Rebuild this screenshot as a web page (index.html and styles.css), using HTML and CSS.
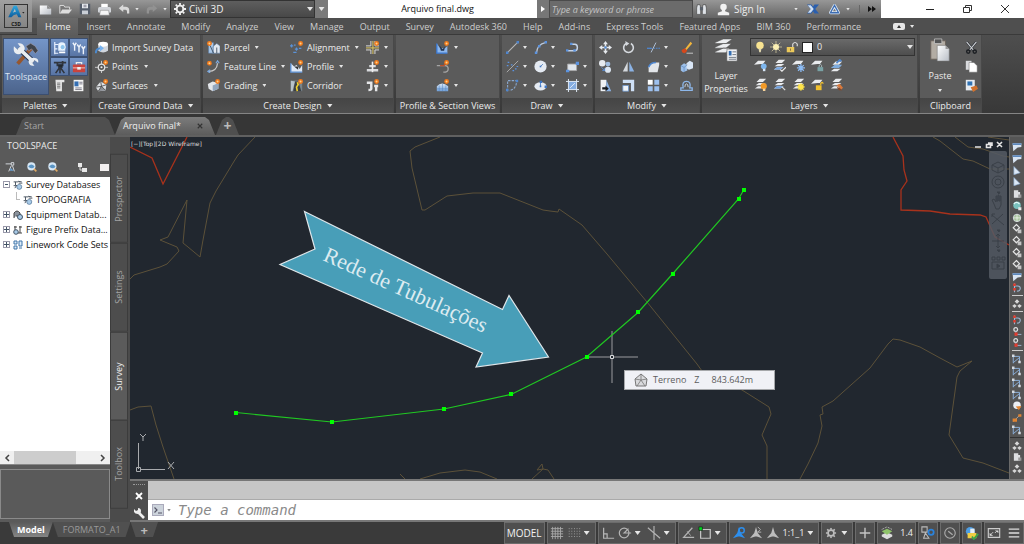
FILE: index.html
```html
<!DOCTYPE html>
<html lang="pt">
<head>
<meta charset="utf-8">
<title>Arquivo final.dwg</title>
<link rel="stylesheet" href="styles.css">
</head>
<body>
<svg class="sprite" aria-hidden="true">
  <defs>
    <linearGradient id="paper" x1="0" y1="0" x2="1" y2="1"><stop offset="0" stop-color="#fff"/><stop offset="1" stop-color="#b9bec6"/></linearGradient>
    <linearGradient id="blue" x1="0" y1="0" x2="0" y2="1"><stop offset="0" stop-color="#dbe9fa"/><stop offset="1" stop-color="#6f9fd8"/></linearGradient>
    <linearGradient id="logo" x1="0" y1="0" x2="0" y2="1"><stop offset="0" stop-color="#2fa8e0"/><stop offset="1" stop-color="#0d5c9c"/></linearGradient>
  </defs>
  <symbol id="spark" viewBox="0 0 6 6"><circle cx="3" cy="3" r="3" fill="#f07a1c"/><circle cx="3" cy="3" r="1.200" fill="#ffd08a"/></symbol>
  <symbol id="new" viewBox="0 0 16 16"><path d="M1 3h9l5 4v7H1z" fill="url(#paper)"/><path d="M10 3v4h5" fill="#888" /></symbol>
  <symbol id="open" viewBox="0 0 16 16"><path d="M1 13V3h5l1 2h6v3" fill="#777" stroke="#ddd" stroke-width="1.2"/><path d="M1 13l3-5h12l-4 5z" fill="#ddd"/></symbol>
  <symbol id="save" viewBox="0 0 16 16"><path d="M1 1h14v14H1z" fill="#545d6b"/><path d="M4 1h8v6H4z" fill="#e6e9ee"/><path d="M4 10h8v5H4z" fill="#c9ced6"/><path d="M6 3h4M6 5h4" stroke="#667"/></symbol>
  <symbol id="print" viewBox="0 0 16 16"><path d="M4 1h8v5H4z" fill="#fff"/><rect y="5" width="16" height="7" rx="2" fill="#d2d5da"/><path d="M3 9h10l1 6H2z" fill="#f6f6f6" stroke="#777" stroke-width=".6"/></symbol>
  <symbol id="undo" viewBox="0 0 16 16"><path d="M1 7l6-5v3h3q5 0 5 5v4h-3v-3q0-2-2-2H7v3z" fill="#d9d9d9"/></symbol>
  <symbol id="redo" viewBox="0 0 16 16"><path d="M15 7L9 2v3H6q-5 0-5 5v4h3v-3q0-2 2-2h3v3z" fill="#929292"/></symbol>
  <symbol id="gear" viewBox="0 0 16 16"><circle cx="8" cy="8" r="4.5" fill="none" stroke="currentColor" stroke-width="2.6"/><path d="M8 0v3M8 13v3M0 8h3M13 8h3M2.3 2.3l2 2M11.7 11.7l2 2M2.3 13.7l2-2M11.7 4.3l2-2" stroke="currentColor" stroke-width="2.4"/></symbol>
  <symbol id="binoc" viewBox="0 0 16 16"><path d="M2 14V6l1-4h3l1 4v8zM9 14V6l1-4h3l1 4v8z" fill="#dfe3e8" stroke="#444" stroke-width=".8"/><path d="M6 5h4v4H6z" fill="#59606a"/></symbol>
  <symbol id="user" viewBox="0 0 16 16"><circle cx="8" cy="5" r="4" fill="#f2f2f2"/><path d="M6 8h4v2l5 2v3H1v-3l5-2z" fill="#f2f2f2"/></symbol>
  <symbol id="xchg" viewBox="0 0 16 16"><path d="M0 2h6l2 3 2-3h6l-5 6 5 6h-6l-2-3-2 3H0l5-6z" fill="#2a5fae"/><path d="M1 3h4l4 5-4 5H1l4-5z" fill="#cfe0f4"/></symbol>
  <symbol id="a360" viewBox="0 0 16 16"><path d="M8 3l5 9H3z" fill="none" stroke="#dde8f5" stroke-width="3.600" stroke-linejoin="round"/><path d="M8 3l5 9H3z" fill="none" stroke="#3d6db2" stroke-width="1.600"/></symbol>
  <symbol id="tools" viewBox="0 0 28 26"><path d="M5 23L20 6" stroke="#96572f" stroke-width="4"/><path d="M14 4l5-3 5 3 3 5-3 3-4-5-3 2z" fill="#3f444b" stroke="#99a" stroke-width=".7"/><path d="M6 6l16 15" stroke="#22304a" stroke-width="6"/><path d="M6 6l16 15" stroke="#e9edf1" stroke-width="4"/><path d="M1 4l4 4 3-3-3-4q5-1 7 3t-2 7-7 1-2-8zM27 22l-4-3-3 2 3 4q-5 1-6-3t2-5 6 0 2 5z" fill="#e9edf1"/></symbol>
  <symbol id="pal1" viewBox="0 0 16 16"><path d="M2 1v14M2 4h4M2 9h3M2 14h4" stroke="#e8f0ff" stroke-width="1.4"/><path d="M6 3q4-3 8 0v8H6z" fill="#e8f3ff"/><circle cx="11" cy="7" r="3" fill="#8fc6ee" stroke="#fff"/><path d="M7 13h7" stroke="#fff" stroke-width="2"/></symbol>
  <symbol id="pal2" viewBox="0 0 16 16"><path d="M1 2l2 3 2-3M3 5v6M6 4l2 3 2-3M8 7v6M11 6l2 3 2-3M13 9v6" fill="none" stroke="#edf2fa" stroke-width="1.6"/></symbol>
  <symbol id="pal3" viewBox="0 0 16 16"><path d="M1 3h14M5 2v4h6V1" fill="none" stroke="#31363e" stroke-width="2"/><path d="M6 5h5v4H6z" fill="#222931"/><path d="M8 8L3 15M8 8l5 7M8 8v7" stroke="#30353e" stroke-width="1.8"/></symbol>
  <symbol id="pal4" viewBox="0 0 16 16"><path d="M5 5V3h6v2" fill="none" stroke="#eee" stroke-width="1.5"/><rect x="1" y="5" width="14" height="9" rx="1" fill="#c9443e"/><path d="M1 9h14" stroke="#f5d4d0"/><path d="M6 8h4v3H6z" fill="#eee"/></symbol>
  <symbol id="pal5" viewBox="0 0 16 16"><path d="M3 1h11v3h-3v11H4z" fill="#e4e4e4"/><path d="M5 5h4M5 7h4M5 9h4M5 11h4" stroke="#666"/></symbol>
  <symbol id="pal6" viewBox="0 0 16 16"><rect x="2" y="1" width="12" height="14" fill="#f4f4f4"/><rect x="3" y="3" width="5" height="6" fill="#346eb2"/><path d="M9 4h4M9 6h4M4 11h8M4 13h8" stroke="#667"/></symbol>
  <symbol id="import" viewBox="0 0 16 16"><path d="M4 4v8q6 4 12 0V4z" fill="#cfd5dd"/><ellipse cx="10" cy="4" rx="6" ry="3" fill="#fff"/><path d="M1 15q0-6 6-6" fill="none" stroke="#4c8bd0" stroke-width="2.400"/><path d="M6 5l5 4-5 4z" fill="#76b2ee"/></symbol>
  <symbol id="points" viewBox="0 0 16 16"><path d="M8 1v15M0 9h16" stroke="#ddd"/><circle cx="8" cy="9" r="4" fill="#555" stroke="#e0e0e0" stroke-width="1.600"/><circle cx="8" cy="9" r="1.300" fill="#eee"/><use href="#spark" x="10" y="0" width="6" height="6"/></symbol>
  <symbol id="surf" viewBox="0 0 16 16"><path d="M1 10l6-7 7 4-1 7-9 1z" fill="#dfe2e6"/><path d="M8 9l-4 6 9-1z" fill="#8b8f95"/><path d="M1 10l7-1-1-6M8 9l6-2M8 9l-4 6M8 9l5 5" stroke="#444" fill="none"/><use href="#spark" x="10" y="0" width="6" height="6"/></symbol>
  <symbol id="parcel" viewBox="0 0 16 16"><path d="M2 2h6v13H2z" fill="#aac8e8"/><path d="M7 7l5-4 4 3v9H7z" fill="#e2e8f0"/><path d="M2 2h6v13H2zM7 7l5-4 4 3v9H7z" fill="none" stroke="#5d7fa8" stroke-width=".7"/><path d="M4 6l4 9M12 8v7" stroke="#345"/><use href="#spark" x="0" y="0" width="6" height="6"/></symbol>
  <symbol id="feat" viewBox="0 0 16 16"><path d="M2 14q10 0 11-10" fill="none" stroke="#c9c9c9" stroke-width="1.500"/><path d="M11 4l2-3 2 3M4 12l-3 2 3 2" fill="none" stroke="#7ba8de" stroke-width="1.500"/><use href="#spark" x="0" y="1" width="6" height="6"/></symbol>
  <symbol id="grade" viewBox="0 0 16 16"><path d="M1 6l6-3 7 2v7l-7 3-5-3z" fill="#e3e6ea"/><path d="M7 8l7-3v7l-7 3z" fill="#93a6bd"/><use href="#spark" x="10" y="0" width="6" height="6"/></symbol>
  <symbol id="align" viewBox="0 0 16 16"><path d="M0 6h4M2 4v4M6 10h4M8 8v4M4 14h4M11 9h3M6 4v2" stroke="#5b93d8" stroke-width="1.400"/><use href="#spark" x="10" y="0" width="6" height="6"/></symbol>
  <symbol id="profile" viewBox="0 0 16 16"><path d="M1 4l4 4 3-2 4 5 3-5v9H1z" fill="#dfe9f7"/><path d="M1 4v11h14" fill="none" stroke="#5a8fd2" stroke-width="1.600"/><path d="M5 8h5v4z" fill="#333"/><use href="#spark" x="10" y="0" width="6" height="6"/></symbol>
  <symbol id="corr" viewBox="0 0 16 16"><path d="M1 2h14v13H1z" fill="#78848a"/><path d="M6 3h4l4 12H4z" fill="#3c4146"/><path d="M9 4l1 3-2 3 1 5" stroke="#f0cf2d" stroke-width="2" fill="none"/><path d="M1 2l5 1-3 12H1z" fill="#b8c2ca"/><use href="#spark" x="10" y="0" width="6" height="6"/></symbol>
  <symbol id="inter" viewBox="0 0 16 16"><path d="M0 6h6V0M0 11h6v5M16 6h-5V0M16 11h-5v5" fill="none" stroke="#ddd" stroke-width="1.200"/><path d="M8.500 0v16M0 8.500h16" stroke="#e0c95a" stroke-width="1.200"/><use href="#spark" x="10" y="0" width="6" height="6"/></symbol>
  <symbol id="assem" viewBox="0 0 16 16"><path d="M1 11h14v3H1zM4 6h8v3H4z" fill="#d8dadd"/><path d="M8 2v13" stroke="#eee" stroke-width="2"/><use href="#spark" x="10" y="0" width="6" height="6"/></symbol>
  <symbol id="pipe" viewBox="0 0 16 16"><path d="M1 3h7v9q0 3-5 3v-3h2V6H1zM10 7h5v3h-1v5h-3v-5h-1z" fill="#e5e6e8"/><use href="#spark" x="10" y="0" width="6" height="6"/></symbol>
  <symbol id="pview" viewBox="0 0 16 16"><path d="M1 3v12h13V6l-3 3H5z" fill="#8db7ec"/><path d="M1 3v12h13" fill="none" stroke="#3a78d2" stroke-width="1.600"/><path d="M4 5l4 5 3-3-1 5H6z" fill="#23344e"/><use href="#spark" x="10" y="0" width="6" height="6"/></symbol>
  <symbol id="sline" viewBox="0 0 16 16"><path d="M1 7h10q4 0 4 4t-6 4" fill="none" stroke="#a4a4a4" stroke-width="1.600"/><path d="M5 7h5l1-3" fill="none" stroke="#b8512c" stroke-width="1.600"/><use href="#spark" x="10" y="0" width="6" height="6"/></symbol>
  <symbol id="sview" viewBox="0 0 16 16"><path d="M1 9q6-7 14 0v6H1z" fill="url(#blue)"/><path d="M4 8v7M8 6v9M12 8v7M1 12h14" stroke="#5284c2" stroke-width=".6"/><use href="#spark" x="10" y="0" width="6" height="6"/></symbol>
  <symbol id="line" viewBox="0 0 16 16"><path d="M2 14L14 2" stroke="#b9b9b9" stroke-width="1.300"/><path d="M0 13h3v3H0zM13 0h3v3h-3z" fill="#4f86cf"/></symbol>
  <symbol id="arc" viewBox="0 0 16 16"><path d="M3 15Q4 4 14 2" fill="none" stroke="#b9c6d8" stroke-width="1.500"/><path d="M1 13h3v3H1zM13 0h3v3h-3zM5 5h3v3H5z" fill="#5b93e0"/></symbol>
  <symbol id="pline" viewBox="0 0 16 16"><path d="M2 12h9q3 0 3-4t-3-4H7" fill="none" stroke="#c4d4ea" stroke-width="1.800"/><path d="M0 10h3v3H0zM5 2h3v3H5zM9 10h3v3H9z" fill="#5b93e0"/></symbol>
  <symbol id="cline" viewBox="0 0 16 16"><path d="M1 15L15 1" stroke="#b9b9b9"/><path d="M1 7h2M2 3h2M6 6h2M11 11h2M8 13h2M13 8h2" stroke="#5b93e0" stroke-width="1.500"/></symbol>
  <symbol id="circ" viewBox="0 0 16 16"><circle cx="8" cy="8" r="7.500" fill="#e4eaf2"/><path d="M8 8l3-3" stroke="#4777b8"/><path d="M7 7h2v2H7z" fill="#3d75c2"/></symbol>
  <symbol id="rect" viewBox="0 0 16 16"><path d="M2 5h11v8H2z" fill="#dfe5ec" stroke="#aaa"/><path d="M0 12h4v3H0zM12 2h4v4h-4z" fill="#5b93e0"/></symbol>
  <symbol id="curve" viewBox="0 0 16 16"><path d="M2 15V2h11q0 11-9 12" fill="none" stroke="#8ba9cf" stroke-dasharray="3 1.500" stroke-width="1.300"/><path d="M0 12h3v3H0zM12 1h3v3h-3z" fill="#4f86cf"/></symbol>
  <symbol id="ell" viewBox="0 0 16 16"><ellipse cx="8" cy="9" rx="7.500" ry="5" fill="#e4eaf2"/><path d="M8 9V3" stroke="#3d75c2"/><path d="M7 2h3v3H7zM7 8h2v2H7zM13 8h3v3h-3z" fill="#3d75c2"/></symbol>
  <symbol id="hatch" viewBox="0 0 16 16"><path d="M3 3h10v10H3z" fill="#86aee2"/><path d="M3 0v16M13 0v16M0 3h16M0 13h16M5 11l6-6" stroke="#dfe9f6" stroke-width="1.200"/></symbol>
  <symbol id="move" viewBox="0 0 16 16"><path d="M8 0l3 4H9v3h3V5l4 3-4 3V9H9v3h2l-3 4-3-4h2V9H4v2L0 8l4-3v2h3V4H5z" fill="#e7eaee"/><circle cx="8" cy="8" r="1.500" fill="#4f86cf"/></symbol>
  <symbol id="rotate" viewBox="0 0 16 16"><path d="M5 3a6 6 0 1 0 6 0" fill="none" stroke="#d5d9de" stroke-width="2"/><path d="M4 0l5 3-4 3z" fill="#d5d9de"/></symbol>
  <symbol id="trim" viewBox="0 0 16 16"><path d="M0 9h6" stroke="#4f86cf" stroke-width="1.600"/><path d="M8 9h8" stroke="#4f86cf" stroke-width="1.300" stroke-dasharray="2 1"/><path d="M5 14L11 2" stroke="#aebfd6" stroke-width="1.200"/></symbol>
  <symbol id="erase" viewBox="0 0 16 16"><path d="M6 10l7-9 2 2-7 8z" fill="#f2b63c"/><path d="M2 11l4-2 3 3-3 3q-4 0-4-4z" fill="#d5481c"/><path d="M8 15h8" stroke="#ddd"/></symbol>
  <symbol id="copy" viewBox="0 0 16 16"><circle cx="4" cy="4" r="4" fill="#e6eaef"/><circle cx="11" cy="5" r="3" fill="#9fbce0"/><circle cx="11" cy="12" r="3.800" fill="#dce6f2"/><path d="M3 9l4 4M7 10v3H4" stroke="#5b93e0" fill="none"/></symbol>
  <symbol id="mirror" viewBox="0 0 16 16"><path d="M7 2v12H1z" fill="#d4d8dd"/><path d="M9 2v12h6z" fill="#8bb2e4"/></symbol>
  <symbol id="fillet" viewBox="0 0 16 16"><path d="M2 15V9q2-6 9-6h4v3l-2 9z" fill="#e3e6ea"/><path d="M2 9q2-6 9-6" fill="none" stroke="#4f86cf" stroke-width="2"/></symbol>
  <symbol id="box" viewBox="0 0 16 16"><path d="M1 7l4-3 4 2v7l-5 2-3-2z" fill="#9dc0ea"/><path d="M8 4l4-3 4 2v7l-5 2-3-2z" fill="#d9e6f6"/><path d="M1 7l4 2 4-3M5 9v6" stroke="#537fb7" fill="none" stroke-width=".7"/></symbol>
  <symbol id="stretch" viewBox="0 0 16 16"><path d="M2 1h7v14H2z" fill="#f0f2f5"/><path d="M9 1l6 14H9z" fill="#8bb2e4"/><path d="M4 10h4V8l4 4-4 3v-2H4z" fill="#161a20"/></symbol>
  <symbol id="scale" viewBox="0 0 16 16"><path d="M1 1h14v14h-4V5H1z" fill="#cfe0f6"/><path d="M1 8h7v7H1z" fill="#f0f4f9" stroke="#6c96cc"/></symbol>
  <symbol id="array" viewBox="0 0 16 16"><path d="M1 1h6v6H1z" fill="#fff"/><path d="M9 1h6v6H9zM1 9h6v6H1zM9 9h6v6H9z" fill="#9dc0ee"/></symbol>
  <symbol id="offset" viewBox="0 0 16 16"><path d="M1 14h14v-3h-3q2-8-4-8t-4 8H1z" fill="none" stroke="#8db7ea" stroke-width="1.600"/><path d="M6 10q0-4 2-4t2 4" fill="none" stroke="#dbe7f6"/></symbol>
  <symbol id="stack" viewBox="0 0 16 16"><path d="M1 13l4-3h8l-4 3zM2 9l4-3h8l-4 3zM3 5l4-4h8l-4 4z" fill="#e9ebee"/></symbol>
  <symbol id="lprops" viewBox="0 0 26 26"><path d="M1 5l9-4h10l-7 5H1zM1 10l9-4h9l-6 5H1zM1 15l9-4h7l-4 5H1z" fill="#eceef0" stroke="#4b4b4b" stroke-width=".6"/><path d="M14 12h11v13H14z" fill="#f2f4f6" stroke="#666" stroke-width=".6"/><path d="M16 14h3v5h-3z" fill="#346eb2"/><path d="M20 15h4M20 18h4M16 21h8M16 23h8" stroke="#68727e"/></symbol>
  <symbol id="l1" viewBox="0 0 16 16"><path d="M0 7l5-5h9l-3 4H8z" fill="#e9ebee"/><circle cx="12" cy="9" r="3.500" fill="#7db6ee"/><path d="M11 12h3v3h-3z" fill="#d6e6f8"/></symbol>
  <symbol id="l2" viewBox="0 0 16 16"><use href="#stack"/><path d="M1 13l4-3h8l-4 3z" fill="#78a9e6"/><path d="M9 13l2 2 5-5" stroke="#eee" fill="none" stroke-width="1.500"/></symbol>
  <symbol id="l3" viewBox="0 0 16 16"><path d="M0 7l5-5h9l-3 4H8z" fill="#e9ebee"/><path d="M11 6v10M6 11h10M7.500 7.500l7 7M14.500 7.500l-7 7" stroke="#8cbcf5" stroke-width="1.600"/></symbol>
  <symbol id="l4" viewBox="0 0 16 16"><path d="M0 7l5-5h9l-3 4H8z" fill="#e9ebee"/><path d="M10 10V8q2-3 3 0v2" stroke="#b4c9cc" fill="none"/><path d="M8 10h7v5H8z" fill="#79a2a5"/></symbol>
  <symbol id="l5" viewBox="0 0 16 16"><use href="#stack" y="2"/><path d="M1 11l5-4h9l-4 4z" fill="#7eacdf"/><path d="M8 5l4-4 2 2" stroke="#4f86cf" stroke-width="2" fill="none"/></symbol>
  <symbol id="l6" viewBox="0 0 16 16"><use href="#stack"/><circle cx="12" cy="10" r="3.800" fill="#f39a27"/><path d="M11 13h3v3h-3z" fill="#f8d49b"/></symbol>
  <symbol id="l7" viewBox="0 0 16 16"><use href="#stack"/><path d="M1 13l4-3h8l-4 3z" fill="#6c9fe0"/><path d="M11 11l4 4" stroke="#ddd" stroke-width="1.500"/></symbol>
  <symbol id="l8" viewBox="0 0 16 16"><use href="#stack"/><circle cx="11" cy="11" r="3.500" fill="#ffe44a"/><path d="M11 6v10M6 11h10M7.500 7.500l7 7M14.500 7.500l-7 7" stroke="#ffe44a"/></symbol>
  <symbol id="l9" viewBox="0 0 16 16"><path d="M0 7l5-5h9l-3 4H8z" fill="#e9ebee"/><path d="M12 9V7q2-3 3 0" stroke="#f2c12e" fill="none" stroke-width="1.500"/><path d="M6 9h7v6H6z" fill="#f2c12e"/></symbol>
  <symbol id="l10" viewBox="0 0 16 16"><use href="#stack"/><path d="M8 9l6 5 2-2-4-5z" fill="#d9793c"/><path d="M8 10l3 5h4z" fill="#8e4520"/></symbol>
  <symbol id="bulb" viewBox="0 0 16 16"><circle cx="8" cy="6" r="5" fill="#f8e391"/><path d="M6 10h4l-1 5H7z" fill="#e0d6ae"/></symbol>
  <symbol id="sun" viewBox="0 0 16 16"><path d="M8 0v16M0 8h16M2.300 2.300l11.400 11.400M13.700 2.300L2.300 13.700" stroke="#d8cda2"/><circle cx="8" cy="8" r="4" fill="#fbf0b4"/></symbol>
  <symbol id="lock" viewBox="0 0 16 16"><path d="M9 8V4q3-4 6 0v3" stroke="#ddd" fill="none" stroke-width="1.500"/><path d="M1 8h10v7H1z" fill="#ecc95a"/><path d="M6 10v3" stroke="#654"/></symbol>
  <symbol id="paste" viewBox="0 0 22 26"><path d="M1 3h16v20H1z" fill="#b3aca3" stroke="#6a6159"/><path d="M5 1h8v5H5z" fill="#555" stroke="#ccc" stroke-width=".8"/><path d="M8 8h9l4 4v13H8z" fill="url(#paper)" stroke="#777" stroke-width=".6"/><path d="M17 8v4h4z" fill="#999"/></symbol>
  <symbol id="cut" viewBox="0 0 16 16"><path d="M2 1l9 11M14 1L5 12" stroke="#2f3338" stroke-width="3"/><path d="M2 1l9 11M14 1L5 12" stroke="#cfd2d6" stroke-width="1.400"/><circle cx="4" cy="13" r="2" fill="none" stroke="#1c1f23" stroke-width="1.700"/><circle cx="12" cy="13" r="2" fill="none" stroke="#1c1f23" stroke-width="1.700"/></symbol>
  <symbol id="copyc" viewBox="0 0 16 16"><path d="M1 1h7v11H1z" fill="#d9dbde"/><path d="M5 3h6l4 4v8H5z" fill="#fff" stroke="#666" stroke-width=".6"/></symbol>
  <symbol id="match" viewBox="0 0 16 16"><path d="M1 1h11v13H1z" fill="#e7ebf0"/><path d="M3 3h6v5H3z" fill="#2f72b4"/><path d="M7 10l7-2 2 4-6 4z" fill="#d0712c"/></symbol>
  <symbol id="person" viewBox="0 0 16 16"><path d="M8 1l2 7 5 6-6-2H7l-6 2 5-6z" fill="currentColor"/></symbol>
  <symbol id="survey" viewBox="0 0 16 16"><path d="M1 3h7M4 3v5M1 9h5M8 2l6 1M9 5h6M3 13l3-5" stroke="#48525e" stroke-width="1.500"/><circle cx="10" cy="11" r="4" fill="#a9cbe8" stroke="#45688c"/></symbol>
  <symbol id="find" viewBox="0 0 16 16"><circle cx="7" cy="7" r="6.500" fill="#d6e7f5"/><path d="M2 7q5-6 10 0-4 6-10 0z" fill="#5b95c4"/><path d="M11 11l4 4" stroke="#e1aa62" stroke-width="2.500"/></symbol>
  <symbol id="station" viewBox="0 0 16 16"><path d="M1 3h9M10 1h4v4h-4zM10 6L6 15M12 6l3 9" stroke="#d9dde2" fill="none" stroke-width="1.500"/><path d="M9 9l5 5H8z" fill="#67a0d3"/></symbol>
  <symbol id="t1" viewBox="0 0 16 16"><path d="M1 2h14v6L9 9l-7 6z" fill="#d8e4f2"/><path d="M1 2h14v3H1z" fill="#5e89bd"/></symbol>
  <symbol id="t2" viewBox="0 0 16 16"><path d="M3 14V1l10 10z" fill="#dce8f5" stroke="#86a6cb"/></symbol>
  <symbol id="t3" viewBox="0 0 16 16"><path d="M3 2h7v3h3v9H3z" fill="#dedfe1"/><path d="M10 9h5v5h-5z" fill="#999"/></symbol>
  <symbol id="t4" viewBox="0 0 16 16"><circle cx="8" cy="7" r="6" fill="#79c1bd"/><path d="M3 5q4-5 9 0" stroke="#e4f7f6" fill="none" stroke-width="2"/><path d="M10 10h5v5h-5z" fill="#e8e8e8"/></symbol>
  <symbol id="t5" viewBox="0 0 16 16"><circle cx="8" cy="8" r="6" fill="#a8c39b" stroke="#eef"/><path d="M8 2v12M2 8h12" stroke="#fff"/></symbol>
  <symbol id="t6" viewBox="0 0 16 16"><path d="M7 1l5 5-5 5-5-5z" fill="none" stroke="#e2e2e2" stroke-width="2"/><path d="M9 9h6v6H9z" fill="#c4c4c4"/></symbol>
  <symbol id="t7" viewBox="0 0 16 16"><path d="M4 1v14M4 5h5q5 0 4 5-1 4-5 3" fill="none" stroke="#9fb6d0" stroke-width="1.800"/><path d="M2 1h4v4H2zM2 8h4v4H2z" fill="#e33c2e"/></symbol>
  <symbol id="t8" viewBox="0 0 16 16"><path d="M2 3v12M2 4h10v10M2 14l11-9" fill="none" stroke="#8db2dd" stroke-width="1.500"/><path d="M0 1h4v4H0zM10 11h4v4h-4z" fill="#d4dae0"/></symbol>
  <symbol id="t9" viewBox="0 0 16 16"><circle cx="8" cy="7" r="6" fill="#eceff3"/><path d="M6 9l9-1-4 7z" fill="#e08432"/></symbol>
  <symbol id="t10" viewBox="0 0 16 16"><path d="M2 14L13 3" stroke="#aaa" stroke-width="1.500"/><path d="M1 9h7v5H1zM10 2h5v4h-5z" fill="#e08432"/></symbol>
  <symbol id="t11" viewBox="0 0 16 16"><circle cx="6" cy="4" r="3" fill="none" stroke="#ddd" stroke-width="2"/><path d="M6 7v7M7 12h8" stroke="#9fb6d0" stroke-width="1.500"/><path d="M4 9h5v5H4z" fill="#e33c2e"/></symbol>
  <symbol id="triad" viewBox="0 0 16 16"><path d="M8 0l4 4-4 4-4-4zM4 8l4 3-4 4-4-4zM12 8l4 3-4 4-4-4z" fill="#d7d7d7" stroke="#444" stroke-width=".6"/></symbol>
</svg>

<header class="head">
  <button class="app" aria-label="Menu do aplicativo">
    <svg viewBox="0 0 22 22"><path d="M1 16L8 1h4l6 15h-4l-2-4q-4 0-7 4z" fill="url(#logo)"/><path d="M7 10q3-2 4-1L9.500 5z" fill="#b8bdc0"/><path d="M19 9h3l-1.500 2z" fill="#222"/></svg>
    <small>C3D</small>
  </button>
  <div class="head-rows">
    <div class="titlebar">
      <div class="qat">
        <button aria-label="Novo"><svg class="i13"><use href="#new"/></svg></button>
        <button aria-label="Abrir"><svg class="i13"><use href="#open"/></svg></button>
        <button aria-label="Salvar"><svg class="i12"><use href="#save"/></svg></button>
        <button aria-label="Imprimir"><svg class="i13"><use href="#print"/></svg></button>
        <button class="drop" aria-label="Desfazer"><svg class="i12"><use href="#undo"/></svg><i class="caret"></i></button>
        <button class="drop" aria-label="Refazer"><svg class="i12"><use href="#redo"/></svg><i class="caret"></i></button>
      </div>
      <button class="workspace"><svg class="i12"><use href="#gear"/></svg><span>Civil 3D</span><i class="caret big"></i></button>
      <button class="qat-more" aria-label="Mais"><i class="caret big"></i></button>
      <h1 class="doc-title">Arquivo final.dwg</h1>
      <button class="search-toggle" aria-label="Recolher busca"><i class="caret east"></i></button>
      <input class="search" type="search" placeholder="Type a keyword or phrase" aria-label="Busca">
      <div class="info">
        <button aria-label="Pesquisar"><svg class="i13"><use href="#binoc"/></svg></button>
        <button class="signin"><svg class="i13"><use href="#user"/></svg><span>Sign In</span><i class="caret"></i></button>
        <button aria-label="Exchange"><svg class="i12"><use href="#xchg"/></svg></button>
        <button class="drop" aria-label="A360"><svg class="i13"><use href="#a360"/></svg><i class="caret"></i></button>
        <button class="more" aria-label="Mais opções"><svg class="i8" viewBox="0 0 8 8"><path d="M0 1l4 3-4 3zM4 1l4 3-4 3z" fill="#111"/></svg></button>
      </div>
      <div class="win">
        <button aria-label="Minimizar"><svg viewBox="0 0 10 10"><path d="M1 5.500h8" stroke="#222"/></svg></button>
        <button aria-label="Restaurar"><svg viewBox="0 0 10 10"><path d="M1.500 3.500h6v5h-6zM3.500 3V1.500h6v5H8" fill="none" stroke="#333"/></svg></button>
        <button aria-label="Fechar"><svg viewBox="0 0 10 10"><path d="M1 1l8 8M9 1L1 9" stroke="#333"/></svg></button>
      </div>
    </div>
    <nav class="tabs">
      <button class="on">Home</button><button>Insert</button><button>Annotate</button><button>Modify</button><button>Analyze</button><button>View</button><button>Manage</button><button>Output</button><button>Survey</button><button>Autodesk 360</button><button>Help</button><button>Add-ins</button><button>Express Tools</button><button>Featured Apps</button><button>BIM 360</button><button>Performance</button>
      <button class="tabs-toggle" aria-label="Minimizar faixa"><svg viewBox="0 0 12 7"><rect width="12" height="7" rx="2" fill="#e6e6e6"/><path d="M4 5l2-3 2 3z" fill="#333"/></svg><i class="caret"></i></button>
    </nav>
  </div>
</header>

<section class="ribbon">
  <div class="panel palettes">
    <div class="body">
      <button class="toolspace-btn"><svg><use href="#tools"/></svg><span>Toolspace</span></button>
      <div class="pal-grid">
        <button class="lit" aria-label="Prospector"><svg class="i14"><use href="#pal1"/></svg></button><button class="lit" aria-label="Settings"><svg class="i14"><use href="#pal2"/></svg></button>
        <button class="lit" aria-label="Survey"><svg class="i14"><use href="#pal3"/></svg></button><button class="lit" aria-label="Toolbox"><svg class="i14"><use href="#pal4"/></svg></button>
        <button aria-label="Panorama"><svg class="i13"><use href="#pal5"/></svg></button><button aria-label="Properties"><svg class="i13"><use href="#pal6"/></svg></button>
      </div>
    </div>
    <h2>Palettes<i class="caret big"></i></h2>
  </div>
  <div class="panel ground">
    <div class="body col">
      <button><svg class="i13"><use href="#import"/></svg>Import Survey Data</button>
      <button><svg class="i13"><use href="#points"/></svg>Points<i class="caret"></i></button>
      <button><svg class="i13"><use href="#surf"/></svg>Surfaces<i class="caret"></i></button>
    </div>
    <h2>Create Ground Data<i class="caret big"></i></h2>
  </div>
  <div class="panel design">
    <div class="body cols3">
      <button><svg class="i13"><use href="#parcel"/></svg>Parcel<i class="caret"></i></button>
      <button><svg class="i13"><use href="#align"/></svg>Alignment<i class="caret"></i></button>
      <button aria-label="Intersections"><svg class="i13"><use href="#inter"/></svg><i class="caret"></i></button>
      <button><svg class="i13"><use href="#feat"/></svg>Feature Line<i class="caret"></i></button>
      <button><svg class="i13"><use href="#profile"/></svg>Profile<i class="caret"></i></button>
      <button aria-label="Assembly"><svg class="i13"><use href="#assem"/></svg><i class="caret"></i></button>
      <button><svg class="i13"><use href="#grade"/></svg>Grading<i class="caret"></i></button>
      <button><svg class="i13"><use href="#corr"/></svg>Corridor</button>
      <button aria-label="Pipe Network"><svg class="i13"><use href="#pipe"/></svg><i class="caret"></i></button>
    </div>
    <h2>Create Design<i class="caret big"></i></h2>
  </div>
  <div class="panel views">
    <div class="body col">
      <button aria-label="Profile View"><svg class="i13"><use href="#pview"/></svg><i class="caret"></i></button>
      <button aria-label="Sample Lines"><svg class="i13"><use href="#sline"/></svg></button>
      <button aria-label="Section Views"><svg class="i13"><use href="#sview"/></svg><i class="caret"></i></button>
    </div>
    <h2>Profile &amp; Section Views</h2>
  </div>
  <div class="panel draw">
    <div class="body icons3">
      <button aria-label="Line"><svg class="i13"><use href="#line"/></svg><i class="caret"></i></button><button aria-label="Arc"><svg class="i13"><use href="#arc"/></svg><i class="caret"></i></button><button aria-label="Polyline"><svg class="i13"><use href="#pline"/></svg></button>
      <button aria-label="Construction"><svg class="i13"><use href="#cline"/></svg><i class="caret"></i></button><button aria-label="Circle"><svg class="i13"><use href="#circ"/></svg><i class="caret"></i></button><button aria-label="Rectangle"><svg class="i13"><use href="#rect"/></svg><i class="caret"></i></button>
      <button aria-label="Curve"><svg class="i13"><use href="#curve"/></svg><i class="caret"></i></button><button aria-label="Ellipse"><svg class="i13"><use href="#ell"/></svg><i class="caret"></i></button><button aria-label="Hatch"><svg class="i13"><use href="#hatch"/></svg><i class="caret"></i></button>
    </div>
    <h2>Draw<i class="caret big"></i></h2>
  </div>
  <div class="panel modify">
    <div class="body icons4">
      <button aria-label="Move"><svg class="i13"><use href="#move"/></svg></button><button aria-label="Rotate"><svg class="i13"><use href="#rotate"/></svg></button><button aria-label="Trim"><svg class="i13"><use href="#trim"/></svg><i class="caret"></i></button><button aria-label="Erase"><svg class="i13"><use href="#erase"/></svg></button>
      <button aria-label="Copy"><svg class="i13"><use href="#copy"/></svg></button><button aria-label="Mirror"><svg class="i13"><use href="#mirror"/></svg></button><button aria-label="Fillet"><svg class="i13"><use href="#fillet"/></svg><i class="caret"></i></button><button aria-label="Explode"><svg class="i13"><use href="#box"/></svg></button>
      <button aria-label="Stretch"><svg class="i13"><use href="#stretch"/></svg></button><button aria-label="Scale"><svg class="i13"><use href="#scale"/></svg></button><button aria-label="Array"><svg class="i13"><use href="#array"/></svg><i class="caret"></i></button><button aria-label="Offset"><svg class="i13"><use href="#offset"/></svg></button>
    </div>
    <h2>Modify<i class="caret big"></i></h2>
  </div>
  <div class="panel layers">
    <div class="body">
      <button class="tall"><svg class="i24"><use href="#lprops"/></svg><span>Layer<br>Properties</span></button>
      <div class="layer-side">
        <button class="layer-combo"><svg class="i12"><use href="#bulb"/></svg><svg class="i12"><use href="#sun"/></svg><svg class="i12"><use href="#lock"/></svg><b class="swatch"></b><span>0</span><i class="caret big"></i></button>
        <div class="layer-grid">
          <button aria-label="Off"><svg class="i13"><use href="#l1"/></svg></button><button aria-label="Isolate"><svg class="i13"><use href="#l2"/></svg></button><button aria-label="Freeze"><svg class="i13"><use href="#l3"/></svg></button><button aria-label="Lock"><svg class="i13"><use href="#l4"/></svg></button><button aria-label="Make Current"><svg class="i13"><use href="#l5"/></svg></button>
          <button aria-label="On"><svg class="i13"><use href="#l6"/></svg></button><button aria-label="Unisolate"><svg class="i13"><use href="#l7"/></svg></button><button aria-label="Thaw"><svg class="i13"><use href="#l8"/></svg></button><button aria-label="Unlock"><svg class="i13"><use href="#l9"/></svg></button><button aria-label="Match Layer"><svg class="i13"><use href="#l10"/></svg></button>
        </div>
      </div>
    </div>
    <h2>Layers<i class="caret big"></i></h2>
  </div>
  <div class="panel clip">
    <div class="body">
      <button class="tall"><svg class="i24"><use href="#paste"/></svg><span>Paste</span><i class="caret"></i></button>
      <div class="col clip-col"><button aria-label="Cut"><svg class="i13"><use href="#cut"/></svg></button><button aria-label="Copy Clip"><svg class="i13"><use href="#copyc"/></svg></button><button aria-label="Match"><svg class="i13"><use href="#match"/></svg></button></div>
    </div>
    <h2>Clipboard</h2>
  </div>
</section>

<nav class="docs">
  <button class="doc start">Start</button>
  <button class="doc active"><span>Arquivo final*</span><svg viewBox="0 0 8 8"><path d="M1 1l6 6M7 1L1 7" stroke="#333" stroke-width="1.500"/></svg></button>
  <button class="doc plus" aria-label="Novo desenho">+</button>
</nav>

<main class="work">
  <aside class="space">
    <div class="space-main">
      <h2>TOOLSPACE</h2>
      <div class="space-tools">
        <button aria-label="Equipamento"><svg class="i10"><use href="#station"/></svg></button><button aria-label="Buscar"><svg class="i10"><use href="#find"/></svg></button><button aria-label="Buscar base"><svg class="i10"><use href="#find"/></svg></button>
        <button aria-label="Árvore"><svg class="i10" viewBox="0 0 10 10"><path d="M1 1h4v4H1zM5 6h5v4H5z" fill="#e8e8e8"/><path d="M3 5v3h3" stroke="#ddd" fill="none"/></svg></button><button aria-label="Painel"><svg class="i10" viewBox="0 0 10 10"><path d="M1 2h9v7H1z" fill="#f1eeee"/></svg></button>
      </div>
      <ul class="tree">
        <li><i class="tw minus"></i><svg class="i10"><use href="#survey"/></svg>Survey Databases</li>
        <li class="child"><i class="elbow"></i><svg class="i10"><use href="#survey"/></svg>TOPOGRAFIA</li>
        <li><i class="tw"></i><svg class="i10" viewBox="0 0 10 10"><path d="M1 8V3q3-4 6 0v3H3" fill="#8a929c" stroke="#444"/><circle cx="7" cy="7" r="2.500" fill="#a9cbe8" stroke="#456"/></svg>Equipment Datab...</li>
        <li><i class="tw"></i><svg class="i10" viewBox="0 0 10 10"><path d="M1 2h3M6 2h3M2 1v4M7 1v7M3 8h6" stroke="#444"/><circle cx="3" cy="7" r="2.300" fill="#a9cbe8" stroke="#456"/></svg>Figure Prefix Data...</li>
        <li><i class="tw"></i><svg class="i10" viewBox="0 0 10 10"><path d="M1 1h3v3H1zM6 1h3v5H6zM1 6h3v3H1zM6 8h3" fill="#dcecfa" stroke="#3e74a8"/></svg>Linework Code Sets</li>
      </ul>
      <div class="hscroll"><button aria-label="Esquerda"><svg viewBox="0 0 6 8"><path d="M5 1L2 4l3 3" fill="none" stroke="#444" stroke-width="1.500"/></svg></button><div class="track"><div class="thumb"></div></div><button aria-label="Direita"><svg viewBox="0 0 6 8"><path d="M1 1l3 3-3 3" fill="none" stroke="#444" stroke-width="1.500"/></svg></button></div>
      <div class="preview"></div>
    </div>
    <nav class="vtabs"><button>Prospector</button><button>Settings</button><button class="on">Survey</button><button>Toolbox</button></nav>
  </aside>

  <div class="right">
    <div class="view">
      <div class="canvas">
        <svg class="drawing" viewBox="130 137 879 342" preserveAspectRatio="xMidYMid slice">
          <g fill="none" stroke="#5c5139">
            <path d="M130 279L134 275 160 267 167 264 179 251 177 247 160 240 168 237 187 200 183 243 188 247 200 257 203 240 210 203 216 191 233 163 238 155 255 137"/>
            <path d="M130 410L138 407 151 406 156 425 163 447 174 479"/>
            <path d="M440 137L415 147 410 151 412 168 417 189 422 210 425 210 447 196 473 193 500 193 543 210 550 211 558 212 559 209 582 225 607 254 647 302 697 364 702 371 742 390 769 407 771 414 762 435 767 446 767 479"/>
            <path d="M800 479L808 464 818 443 822 426 820 415 823 414 822 407 833 401 870 368 888 344 893 339 900 340 920 347 940 358 957 367 972 361 960 371 957 377 949 435 963 458 983 463 1009 473"/>
            <path d="M933 137L940 141 963 159 973 161 990 169 1009 169M955 137L968 147 983 149 1003 156 1009 157M988 137L1009 140"/>
            <path d="M400 474L405 479M420 479L440 473 465 470 480 472 497 479M532 479L543 469 537 470 542 464 543 469 548 470 554 479"/>
          </g>
          <path d="M130 147L152 158 163 184 187 137M893 137L903 156 904 170 907 181 901 190 901 210 930 211 950 214 980 215 986 217 995 237 1009 245" fill="none" stroke="#a8321c" stroke-width="1.300"/>
          <path class="arrow" d="M304.500 211.500L502.500 309.500 509 295.500 548.500 357 476 367 482.500 353 280 264.500 315 249z"/>
          <text class="arrow-text" transform="translate(322 260) rotate(24.300)">Rede de Tubulações</text>
          <path d="M586 357h52M612 331v52" stroke="#73767b" stroke-width="1.500"/>
          <path d="M236 412.500L332 422 444 409 511 394.500 586.500 357 638 312.500 672.500 274 738.500 199 744 189.500" fill="none" stroke="#20c822" stroke-width="1.200"/>
          <path d="M234 411h4v4h-4zM330 420h4v4h-4zM442 407h4v4h-4zM509 392h4v4h-4zM585 355h4v4h-4zM636 310h4v4h-4zM671 272h4v4h-4zM737 197h4v4h-4zM742 188h4v4h-4z" fill="#0f0"/>
          <path d="M610.500 355.500h3v3h-3z" fill="#21272f" stroke="#d8dadc"/>
          <path d="M138.500 443v26M141 469.500h24M136.500 467.500h4v4h-4zM140 434l3 3 3-3M143 437v4M168 462l6 7M174 462l-6 7" fill="none" stroke="#a9abae"/>
        </svg>
        <span class="vp-label">[−][Top][2D Wireframe]</span>
        <div class="vp-win"><svg viewBox="0 0 28 8"><path d="M0 6h6M11.500 3.500h4v3h-4zM13 2h4v3M22 1l5 5M27 1l-5 5" fill="none" stroke="#e5e5e5" stroke-width="1.600"/></svg></div>
        <div class="navbar"><svg viewBox="0 0 18 128" fill="none" stroke="#3f454d"><path d="M3 14l6-3 6 3v5l-6 3-6-3zM3 14l6 3 6-3M9 17v5"/><circle cx="9" cy="31" r="6"/><circle cx="9" cy="31" r="3"/><path d="M5 53l-2-4 2-1 2 3v-6h1v5h1v-6h1v6h1v-5h1v9l-2 4H7zM3 64l12 10M14 63L3 73M3 63h3M3 63v3M9 83v14M3 90h12M7 85l2-2 2 2M7 95l2 2 2-2M3 106h3v3H3zM8 106h3v3H8zM13 106h3v3h-3zM3 111h12v7H3z"/><path d="M8 113l3 2-3 2zM8 41h3l-1 2zM8 79h3l-1 2zM8 99h3l-1 2z" fill="#3f454d"/></svg></div>
        <div class="tip"><svg viewBox="0 0 14 14"><path d="M7 1l6 5-1 7H2L1 6z" fill="#d9dadd" stroke="#777"/><path d="M7 1v6M7 7l6-1M7 7L1 6M7 7l-4 6M7 7l4 6" stroke="#777" stroke-width=".8"/></svg><span>Terreno</span><span>Z</span><span>843.642m</span></div>
      </div>
      <div class="side-tools">
        <svg><use href="#t1"/></svg><svg><use href="#t1"/></svg><svg><use href="#t2"/></svg><svg><use href="#t2"/></svg><svg><use href="#t3"/></svg><svg><use href="#t4"/></svg><svg><use href="#t5"/></svg><svg><use href="#t6"/></svg><svg><use href="#t6"/></svg><svg><use href="#t6"/></svg><svg><use href="#t6"/></svg><svg><use href="#t1"/></svg><svg><use href="#t7"/></svg><hr><svg><use href="#triad"/></svg><hr><svg><use href="#t7"/></svg><svg><use href="#t11"/></svg><svg><use href="#t11"/></svg><hr><svg><use href="#t8"/></svg><svg><use href="#t8"/></svg><svg><use href="#t8"/></svg><svg><use href="#t8"/></svg><svg><use href="#t9"/></svg><svg><use href="#t10"/></svg><svg><use href="#t8"/></svg><hr class="dark"><svg><use href="#triad"/></svg><svg><use href="#t3"/></svg><svg><use href="#triad"/></svg>
      </div>
    </div>
    <div class="command">
      <div class="handle"><i></i><svg viewBox="0 0 8 8"><path d="M1 1l6 6M7 1L1 7" stroke="#fff" stroke-width="1.800"/></svg><svg viewBox="0 0 12 12"><path d="M5 5l6 6" stroke="#eee" stroke-width="2.600"/><path d="M1 2l2 2 2-1V1q3 0 3 3T5 7 1 5z" fill="#eee"/></svg></div>
      <div class="cmd-rows"><div class="history"></div><label class="prompt"><svg viewBox="0 0 12 12"><rect x=".5" y=".5" width="11" height="11" fill="#ccd3db" stroke="#aab"/><path d="M2.500 3.500L5 6 2.500 8.500M6 9h4" fill="none" stroke="#556" stroke-width="1.200"/></svg><i class="caret grey"></i><input type="text" placeholder="Type a command" aria-label="Comando"></label></div>
    </div>
  </div>
</main>

<footer class="foot">
  <nav class="layouts"><button class="on">Model</button><button>FORMATO_A1</button><button class="plus" aria-label="Novo layout">+</button></nav>
  <div class="status">
    <button class="model">MODEL</button>
    <div class="grp">
      <button aria-label="Grid"><svg viewBox="0 0 16 16"><path d="M3 1v14M6 1v14M9 1v14M12 1v14M1 3h14M1 6h14M1 9h14M1 12h14" stroke="#aaa"/></svg></button><button aria-label="Snap"><svg viewBox="0 0 16 16"><path d="M2 3h13M2 6h13M2 9h13M2 12h13" stroke="#aaa" stroke-dasharray="1 2"/></svg></button><i class="caret big"></i>
    </div>
    <div class="grp">
      <button aria-label="Ortho"><svg viewBox="0 0 16 16"><path d="M3 2v12h12M3 9h4v5" fill="none" stroke="#b5b5b5" stroke-width="1.400"/></svg></button><button aria-label="Polar"><svg viewBox="0 0 16 16"><circle cx="7" cy="8" r="5.500" fill="none" stroke="#b5b5b5" stroke-width="1.400"/><path d="M15 8H7l5-5" fill="none" stroke="#b5b5b5" stroke-width="1.400"/></svg></button><i class="caret big"></i><button aria-label="Isodraft"><svg viewBox="0 0 16 16"><path d="M1 2l14 12M8 0v16" stroke="#b5b5b5" stroke-width="1.300"/></svg></button><i class="caret big"></i>
    </div>
    <div class="grp">
      <button aria-label="Otrack"><svg viewBox="0 0 16 16"><path d="M13 2L3 13h12" fill="none" stroke="#b5b5b5" stroke-width="1.400"/><path d="M7 6l4 5" stroke="#b5b5b5"/></svg></button><button aria-label="Osnap"><svg viewBox="0 0 16 16"><path d="M3 4h11v10H3z" fill="none" stroke="#c5c5c5" stroke-width="1.400"/><path d="M1 1h4v4H1z" fill="#0d2" stroke="#111" stroke-width=".7"/></svg></button><i class="caret big"></i>
    </div>
    <div class="grp">
      <button class="hot" aria-label="Annotation visibility"><svg viewBox="0 0 16 16"><use href="#person"/><circle cx="11" cy="5" r="3" fill="none" stroke="currentColor" stroke-width="1.600"/></svg></button><button aria-label="Auto scale"><svg viewBox="0 0 16 16"><use href="#person"/><path d="M10 1l3 3-3 3h4" fill="none" stroke="currentColor"/></svg></button><button aria-label="Annotation scale"><svg viewBox="0 0 16 16"><use href="#person"/></svg></button><button class="txt">1:1_1</button><i class="caret big"></i>
    </div>
    <div class="grp"><button aria-label="Workspace"><svg viewBox="0 0 16 16"><use href="#gear" x="2" y="2" width="12" height="12"/></svg></button><i class="caret big"></i></div>
    <div class="grp"><button aria-label="Monitor"><svg viewBox="0 0 16 16"><path d="M8 2v12M2 8h12" stroke="#c5c5c5" stroke-width="1.600"/></svg></button></div>
    <div class="grp wide"><button aria-label="Elevation"><svg viewBox="0 0 16 16"><path d="M2 10l6-3 6 3v2l-6 3-6-3z" fill="#ddd"/><path d="M2 6l6-3 6 3-6 4z" fill="#8fc46a"/><path d="M2 4l6-3 6 3" fill="none" stroke="#ddd" stroke-dasharray="1 1"/></svg></button><button class="txt">1.4</button></div>
    <div class="grp"><button aria-label="Quick"><svg viewBox="0 0 16 16"><path d="M1 1h6v6H1zM5 8l4 6H3z" fill="none" stroke="#bbb" stroke-width="1.200"/><circle cx="11.500" cy="7" r="3" fill="none" stroke="#2b83dc" stroke-width="2"/></svg></button></div>
    <div class="grp"><button aria-label="Isolate"><svg viewBox="0 0 16 16"><circle cx="8" cy="8" r="6" fill="none" stroke="#aaa" stroke-width="1.300"/><path d="M6 6l5 4" stroke="#aaa" stroke-width="1.500"/></svg></button></div>
    <div class="grp"><button aria-label="Hardware"><svg viewBox="0 0 16 16"><circle cx="6" cy="6" r="5" fill="#4d9de3"/><path d="M3 8h10v6H3z" fill="#f0ce43"/><path d="M6 3h5v5H6z" fill="#e4eef6"/><path d="M8 12l2 3 5-6" fill="none" stroke="#3ba64a" stroke-width="2"/></svg></button></div>
    <div class="grp wide"><button aria-label="Clean screen"><svg viewBox="0 0 16 16"><path d="M1.500 3h13v10h-13z" fill="none" stroke="#ccc" stroke-width="1.300"/><path d="M9 5h4v3zM3 11V8l4 3z" fill="#ddd"/><path d="M5 9l2-2M9 8l2-2" stroke="#ddd"/></svg></button><button aria-label="Customization"><svg viewBox="0 0 16 16"><path d="M2 3.500h12M2 8h12M2 12.500h12" stroke="#ddd" stroke-width="1.500"/></svg></button></div>
  </div>
</footer>
</body>
</html>
```
FILE: styles.css
```css
* { box-sizing: border-box; }
html, body { height: 100%; }
body {
  margin: 0;
  display: grid;
  grid-template-rows: auto auto auto 1fr auto;
  background: #535353;
  color: #ebebeb;
  font: 9px/12px "Open Sans", "Noto Sans", sans-serif;
  overflow: hidden;
}
button {
  font: inherit; color: inherit; background: none; border: 0; padding: 0; margin: 0;
  display: flex; align-items: center; white-space: nowrap;
}
input { font: inherit; border: 0; padding: 0; min-width: 0; }
h1, h2 { margin: 0; font: inherit; }
svg { display: block; flex: none; }
.sprite { position: absolute; width: 0; height: 0; }
.i8 { width: 8px; height: 8px; }
.i10 { width: 10px; height: 10px; }
.i12 { width: 12px; height: 12px; }
.i13 { width: 13px; height: 13px; }
.i14 { width: 14px; height: 14px; }
.i24 { width: 24px; height: 24px; }
.caret { flex: none; width: 4px; height: 3px; background: #e6e6e6; clip-path: polygon(0 0, 100% 0, 50% 100%); }
.caret.big { width: 6px; height: 4px; }
.caret.east { width: 4px; height: 6px; clip-path: polygon(0 0, 100% 50%, 0 100%); background: #fff; }
.caret.grey { background: #888; }

/* Title bar and ribbon tabs */
.head { display: flex; height: 35px; background: #4f4f4f; border-bottom: 1px solid #3a3a3a; }
.app { flex: none; width: 32px; height: 32px; background: linear-gradient(#a0a0a0, #808080); flex-direction: column; justify-content: center; outline: 1px solid #333; outline-offset: -5px; }
.app svg { width: 20px; height: 17px; }
.app small { font-size: 5px; line-height: 5px; color: #111; font-weight: 700; }
.head-rows { flex: 1; min-width: 0; }
.titlebar { display: flex; height: 18px; background: #fff; }
.qat, .info { display: flex; align-items: center; background: linear-gradient(#979797, #646464); }
.qat { flex: none; width: 138px; padding-left: 7px; gap: 7px; }
.drop { gap: 5px; }
.workspace { flex: none; width: 145px; padding: 0 1px 0 3px; gap: 3px; background: linear-gradient(#5e5e5e, #484848); border: 1px solid #333; color: #eee; font-size: 10px; }
.workspace span { flex: 1; text-align: left; }
.qat-more { flex: none; width: 13px; justify-content: center; background: #7a7a7a; }
.doc-title { flex: 1; text-align: center; color: #111; line-height: 18px; white-space: nowrap; padding-left: 10px; }
.search-toggle { flex: none; width: 12px; justify-content: center; background: #777; }
.search { flex: none; width: 144px; height: 18px; padding-left: 2px; background: #6b6b6b; border: 1px solid #4b4b4b; font-style: italic; color: #ddd; }
.search::placeholder { color: #c4c4c4; opacity: 1; }
.info { flex: none; width: 188px; padding-left: 2px; gap: 9px; color: #eee; }
.signin { gap: 4px; width: 95px; font-size: 10px; }
.signin span { flex: 1; text-align: left; }
.info .more { margin-left: auto; padding: 0 5px 0 8px; border-left: 1px solid #666; }
.win { flex: none; width: 143px; display: flex; justify-content: space-around; padding-left: 30px; }
.win svg { width: 10px; height: 10px; }
.tabs { display: flex; height: 17px; padding-left: 5px; color: #cecece; }
.tabs button { padding: 0 8px; line-height: 14px; }
.tabs .on { background: linear-gradient(#6a6a6a, #5c5c5c); color: #eee; }
.tabs .tabs-toggle { margin-left: 16px; gap: 5px; }
.tabs-toggle svg { width: 12px; height: 7px; }

/* Ribbon */
.ribbon { display: flex; gap: 2px; height: 79px; padding: 0 2px; background: linear-gradient(#4e4e4e, #383838); border-bottom: 1px solid #858585; }
.panel { flex: none; display: flex; flex-direction: column; background: #5b5b5b; border-right: 1px solid #494949; }
.panel h2 { height: 15px; display: flex; align-items: center; justify-content: center; gap: 5px; background: linear-gradient(#454545, #4e4e4e); white-space: nowrap; }
.panel .body { flex: 1; padding: 3px 0 3px; min-height: 0; }
.palettes { width: 88px; }
.ground { width: 109px; }
.design { width: 191px; }
.views { width: 104px; }
.draw { width: 91px; }
.modify { width: 105px; }
.layers { width: 216px; }
.clip { width: 62px; }
.palettes .body, .layers .body, .clip .body { display: flex; }
.palettes .body { padding-left: 1px; gap: 1px; }
.toolspace-btn { width: 46px; flex-direction: column; justify-content: flex-start; gap: 4px; padding-top: 3px; background: linear-gradient(#7495c8, #4c648c); border: 1px solid #3c4f70; color: #dce4f2; }
.toolspace-btn svg { width: 26px; height: 25px; }
.pal-grid { display: grid; grid-template-columns: 19px 19px; grid-auto-rows: 19px; }
.pal-grid button { justify-content: center; }
.pal-grid .lit { background: linear-gradient(#7495c8, #5874a4); border: 1px solid #3c4f70; }
.col { display: flex; flex-direction: column; }
.col button { height: 19px; }
.panel .body.col { padding-left: 3px; }
.ground .body button { gap: 4px; }
.cols3, .icons3, .icons4 { display: grid; grid-auto-rows: 19px; }
.panel .cols3 { grid-template-columns: 83px 76px 1fr; padding-left: 4px; }
.cols3 button, .icons3 button, .icons4 button { gap: 4px; }
.cols3 button .caret { margin-left: 1px; }
.views .body button { padding-left: 37px; gap: 5px; }
.panel .icons3 { grid-template-columns: 28px 32px 1fr; padding-left: 4px; }
.panel .icons4 { grid-template-columns: 23px 25px 33px 1fr; padding-left: 4px; }
.ground button .caret { margin-left: 2px; }
.tall { flex-direction: column; gap: 7px; }
.tall span { line-height: 13px; }
.layers .tall { width: 48px; }
.layer-side { flex: 1; padding-right: 2px; }
.layer-combo { width: 100%; height: 18px; padding: 0 1px 0 3px; gap: 4px; background: linear-gradient(#6a6a6a, #4e4e4e); border: 1px solid #333; }
.layer-combo span { flex: 1; text-align: left; }
.swatch { width: 11px; height: 11px; background: #fff; border: 1px solid #222; }
.layer-grid { display: grid; grid-template-columns: repeat(5, 19px); grid-auto-rows: 19px; padding-left: 4px; }
.clip .tall { width: 40px; }
.clip-col { padding-left: 5px; }

/* Drawing tabs */
.docs { display: flex; height: 23px; padding: 3px 0 0 16px; background: #363636; border-bottom: 2px solid #606060; color: #a6a6a6; }
.doc { height: 18px; padding: 0 8px; background: #4f4f4f; clip-path: polygon(0 100%, 6px 3px, 10px 0, calc(100% - 10px) 0, calc(100% - 6px) 3px, 100% 100%); }
.doc svg { width: 6px; height: 6px; }
.doc.start { width: 99px; }
.doc.active { width: 100px; justify-content: space-between; padding: 0 12px 0 8px; background: linear-gradient(#7c7c7c, #5c5c5c); color: #eee; }
.doc.plus { width: 23px; margin-left: 1px; font-size: 14px; font-weight: 700; color: #bbb; justify-content: center; padding: 0; }

/* Toolspace */
.work { display: flex; min-height: 0; background: #535353; }
.space { flex: none; width: 130px; display: flex; background: #4b4b4b; }
.space-main { flex: none; width: 110px; display: flex; flex-direction: column; background: #5a5a5a; }
.space h2 { height: 20px; padding: 3px 7px; }
.space-tools { display: grid; grid-template-columns: 22px 21px 29px 22px 1fr; height: 20px; padding-left: 5px; }
.tree { flex: 1; margin: 0; padding: 0 0 0 3px; list-style: none; background: #fff; color: #111; overflow: hidden; min-height: 0; }
.tree li { display: flex; align-items: center; gap: 3px; height: 15px; white-space: nowrap; }
.tw { flex: none; width: 7px; height: 7px; border: 1px solid #99a; background: linear-gradient(#456, #456) center / 5px 1px no-repeat, linear-gradient(#456, #456) center / 1px 5px no-repeat; }
.tw.minus { background: linear-gradient(#456, #456) center / 3px 1px no-repeat; }
.tree .child { padding-left: 13px; }
.elbow { width: 4px; height: 8px; border-left: 1px solid #bbb; border-bottom: 1px solid #bbb; align-self: flex-start; }
.hscroll { display: flex; height: 14px; background: #f0f0f0; border-bottom: 1px solid #888; }
.hscroll button { width: 14px; justify-content: center; }
.hscroll svg { width: 6px; height: 8px; }
.track { flex: 1; }
.thumb { width: 75%; height: 13px; background: #cdcdcd; }
.preview { height: 50px; margin: 4px 0 3px; border: 1px solid #8a8a8a; }
.vtabs { width: 18px; display: flex; flex-direction: column; padding: 17px 0 13px; color: #a4a4a4; }
.vtabs button { flex: 1; writing-mode: vertical-rl; transform: rotate(180deg); justify-content: center; background: #4d4d4d; border: 1px solid #3c3c3c; }
.vtabs .on { background: #5b5b5b; color: #eee; }

/* Drawing area */
.right { flex: 1; min-width: 0; display: flex; flex-direction: column; }
.view { flex: 1; display: flex; min-height: 0; }
.canvas { position: relative; flex: 1; min-width: 0; background: #21272f; overflow: hidden; }
.drawing { width: 100%; height: 100%; }
.arrow { fill: #489eb8; stroke: #dfe6ea; stroke-width: 1.200; }
.arrow-text { font: 22px "Liberation Serif", serif; fill: #dcebf0; }
.vp-label { position: absolute; left: 1px; top: 2px; font: 6px/9px "DejaVu Sans", sans-serif; color: #ddd; }
.vp-win { position: absolute; right: 6px; top: 4px; }
.vp-win svg { width: 28px; height: 8px; }
.navbar { position: absolute; right: 2px; top: 14px; width: 18px; height: 128px; background: #555b64; border-radius: 2px; opacity: .85; }
.tip { position: absolute; left: 494px; top: 233px; height: 20px; width: 151px; display: flex; align-items: center; gap: 8px; padding-left: 9px; background: #f0f1f6; border: 1px solid #a5a7aa; color: #5c5c5c; }
.tip svg { width: 14px; height: 14px; margin-right: -3px; }
.tip span:last-child { margin-left: 4px; }
.side-tools { flex: none; width: 15px; display: flex; flex-direction: column; align-items: center; padding: 4px 0; background: #555; border-left: 1px solid #6a6a6a; }
.side-tools svg { flex: 0 1 12px; width: 10px; min-height: 0; }
.side-tools hr { width: 11px; height: 1px; margin: 1px 0 2px; border: 0; background: #ccc; }
.side-tools .dark { width: 15px; background: #333; }
.command { display: flex; flex: none; height: 43px; padding: 2px 0; background: #777; }
.handle { width: 18px; display: flex; flex-direction: column; align-items: center; justify-content: space-between; background: #4d4d4d; padding: 3px 0 1px; }
.handle i { width: 12px; border-top: 1px dotted #999; }
.handle svg { width: 8px; height: 8px; }
.handle svg:last-child { width: 12px; height: 12px; }
.cmd-rows { flex: 1; display: flex; flex-direction: column; background: #fff; }
.history { height: 19px; background: #c6c6c6; border-bottom: 1px solid #aaa; }
.prompt { flex: 1; display: flex; align-items: center; padding-left: 4px; gap: 3px; }
.prompt svg { width: 12px; height: 12px; }
.prompt input { flex: 1; margin-left: 4px; font: italic 14px/18px "DejaVu Sans Mono", monospace; }
.prompt input::placeholder { color: #8a8a8a; opacity: 1; }

/* Footer */
.foot { display: flex; justify-content: space-between; height: 22px; background: #3a3a3a; }
.layouts { display: flex; padding-left: 9px; height: 15px; color: #999; }
.layouts button { padding: 0 10px; background: #505050; clip-path: polygon(0 0, 100% 0, calc(100% - 5px) 100%, 5px 100%); }
.layouts .on { background: linear-gradient(#5a5a5a, #858585); color: #fff; font-weight: 700; padding: 0 8px; }
.layouts .plus { font-size: 13px; font-weight: 700; color: #bbb; }
.status { display: flex; gap: 2px; color: #f2f2f2; }
.model, .grp { display: flex; align-items: center; background: #4f4f4f; border: 1px solid #6c6c6c; }
.model { padding: 0 2px; font-size: 10px; }
.grp { padding: 0 2px; gap: 3px; color: #bdbdbd; }
.grp.wide { gap: 6px; }
.grp svg { width: 14px; height: 14px; }
.grp .hot { color: #2d8fee; }
.grp .txt { color: #f2f2f2; }
.grp .caret { margin-right: 3px; }
```
